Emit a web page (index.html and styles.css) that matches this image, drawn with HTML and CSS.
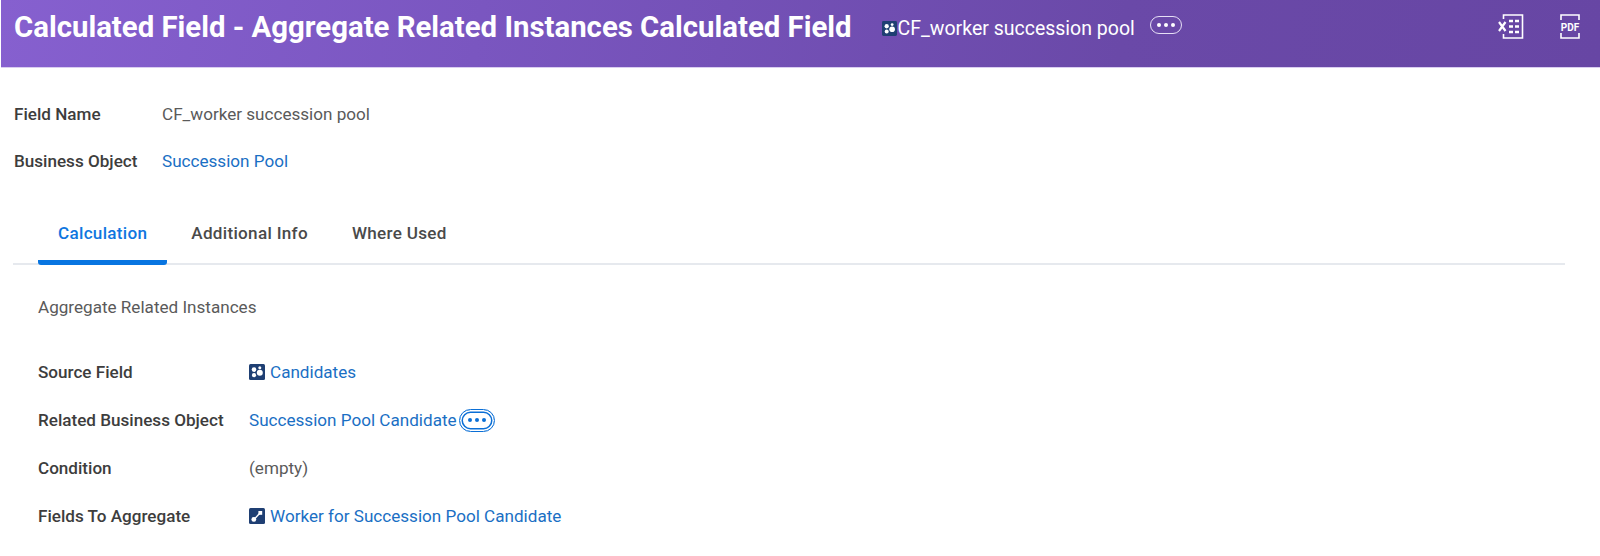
FILE: index.html
```html
<!DOCTYPE html>
<html lang="en">
<head>
<meta charset="UTF-8" />
<title>Calculated Field</title>
<link rel="stylesheet" href="styles.css">
</head>
<body>

<header class="title-bar">
  <h1>Calculated Field - Aggregate Related Instances Calculated Field</h1>
  <div class="title-instance">
    <svg class="obj-icon small" viewBox="0 0 16 16">
      <rect width="16" height="16" rx="1.5" fill="#1f3f73"/>
      <circle cx="5" cy="5.600" r="2.300" fill="#fff"/>
      <circle cx="5" cy="11.200" r="2.100" fill="#fff"/>
      <circle cx="10.800" cy="8.800" r="3" fill="#fff"/>
      <circle cx="10.800" cy="3.800" r="1.500" fill="#fff"/>
    </svg>
    <span>CF_worker succession pool</span>
  </div>
  <button class="dots-btn light"><i></i><i></i><i></i></button>
  <div class="export-icons">
    <svg class="export" viewBox="0 0 26 25" fill="none" stroke="#fff" stroke-width="1.6">
      <path d="M5.500 5V1h19v23h-19v-4"/>
      <path d="M1 8l6.500 9M7.500 8L1 17" stroke-width="2.200"/>
      <path d="M11 7h4M17 7h4M11 12.500h4M17 12.500h4M11 18h4M17 18h4" stroke-width="2.400"/>
    </svg>
    <svg class="export pdf" viewBox="0 0 22 25" fill="none" stroke="#fff" stroke-width="1.6">
      <path d="M2 6V1h18v5M2 19v5h18v-5"/>
      <text x="11" y="16.500" class="pdf-text">PDF</text>
    </svg>
  </div>
</header>

<main>
  <section class="summary">
    <div class="summary-row">
      <span class="label">Field Name</span>
      <span class="value">CF_worker succession pool</span>
    </div>
    <div class="summary-row">
      <span class="label">Business Object</span>
      <a class="link" href="#">Succession Pool</a>
    </div>
  </section>

  <nav class="tabs">
    <a href="#" class="tab active">Calculation</a>
    <a href="#" class="tab">Additional Info</a>
    <a href="#" class="tab">Where Used</a>
  </nav>

  <section class="tab-body">
    <p class="calc-type">Aggregate Related Instances</p>
    <div class="fields">
      <div class="field-row">
        <span class="label">Source Field</span>
        <span class="field-value">
          <svg class="obj-icon" viewBox="0 0 16 16">
            <rect width="16" height="16" rx="1.5" fill="#1f3f73"/>
            <circle cx="5" cy="5.600" r="2.300" fill="#fff"/>
            <circle cx="5" cy="11.200" r="2.100" fill="#fff"/>
            <circle cx="10.800" cy="8.800" r="3" fill="#fff"/>
            <circle cx="10.800" cy="3.800" r="1.500" fill="#fff"/>
          </svg>
          <a class="link" href="#">Candidates</a>
        </span>
      </div>
      <div class="field-row">
        <span class="label">Related Business Object</span>
        <span class="field-value tight">
          <a class="link" href="#">Succession Pool Candidate</a>
          <button class="dots-btn focus"><i></i><i></i><i></i></button>
        </span>
      </div>
      <div class="field-row">
        <span class="label">Condition</span>
        <span class="value">(empty)</span>
      </div>
      <div class="field-row">
        <span class="label">Fields To Aggregate</span>
        <span class="field-value">
          <svg class="obj-icon" viewBox="0 0 16 16">
            <rect width="16" height="16" rx="1.5" fill="#1f3f73"/>
            <path d="M5 11.500L11 5" stroke="#fff" stroke-width="1.4"/>
            <circle cx="4.800" cy="11.400" r="2.400" fill="#fff"/>
            <rect x="9.400" y="3" width="3.800" height="3.800" fill="#fff"/>
          </svg>
          <a class="link" href="#">Worker for Succession Pool Candidate</a>
        </span>
      </div>
    </div>
  </section>
</main>

</body>
</html>
```

FILE: styles.css
```css
* {
  box-sizing: border-box;
}
html, body {
  height: 100%;
}
body {
  margin: 0;
  background: #fff;
  color: #4a4a4a;
  font-family: Roboto, "Liberation Sans", sans-serif;
  font-size: 17.1px;
  overflow: hidden;
}

/* top purple bar */
.title-bar {
  height: 68px;
  margin-left: 1px;
  padding: 0 19px 14px 13px;
  display: flex;
  align-items: center;
  color: #fff;
  background: linear-gradient(100deg, #8660cf 0%, #7a56c0 30%, #6a49a8 70%, #6746a4 100%);
  border-bottom: 1px solid #d9cdf0;
}
.title-bar h1 {
  margin: 0;
  font-size: 29.35px;
  font-weight: 700;
  white-space: nowrap;
}
.title-instance {
  display: flex;
  align-items: center;
  gap: 1px;
  margin-left: 30px;
  margin-top: 3px;
  font-size: 19.5px;
}
.obj-icon {
  width: 16px;
  height: 16px;
  flex: none;
}
.obj-icon.small {
  width: 15px;
  height: 15px;
}
.dots-btn {
  width: 32px;
  height: 18px;
  padding: 0;
  display: inline-flex;
  align-items: center;
  justify-content: center;
  gap: 3px;
  background: none;
  border-radius: 9px;
}
.dots-btn i {
  width: 4px;
  height: 4px;
  border-radius: 50%;
  background: currentColor;
}
.dots-btn.light {
  margin-left: 15px;
  margin-bottom: 3px;
  color: #fff;
  border: 1.5px solid #e6dff5;
}
.dots-btn.focus {
  width: 36px;
  height: 23px;
  margin-left: 2px;
  border-radius: 12px;
  color: #0b6fd6;
  border: 1.5px solid #0b6fd6;
  box-shadow: inset 0 0 0 1.5px #fff, inset 0 0 0 3px #0b6fd6;
}
.export-icons {
  margin-left: auto;
  display: flex;
  gap: 35px;
}
.export {
  width: 26px;
  height: 25px;
}
.export.pdf {
  width: 22px;
}
.pdf-text {
  font-family: Roboto, sans-serif;
  font-size: 10px;
  font-weight: 700;
  fill: #fff;
  stroke: none;
  text-anchor: middle;
}

main {
  padding: 0 35px 0 14px;
}
.label {
  font-weight: 500;
  color: #3d3d3d;
}
.link {
  color: #1a6fc4;
  text-decoration: none;
}
.value {
  color: #5a5a5a;
}

/* field name / business object */
.summary {
  padding-top: 22px;
}
.summary-row {
  display: grid;
  grid-template-columns: 148px 1fr;
  height: 47.5px;
  align-items: center;
}

/* tabs */
.tabs {
  margin-top: 24px;
  margin-left: -1px;
  padding-left: 25px;
  height: 56px;
  display: flex;
  border-bottom: 2px solid #e6e9ee;
}
.tab {
  padding: 14px 20px 0;
  height: 56px;
  font-weight: 500;
  color: #4a4a4a;
  text-decoration: none;
  letter-spacing: 0.3px;
  border-bottom: 5px solid transparent;
}
.tab + .tab {
  padding-left: 24px;
}
.tab.active {
  color: #0f76e0;
  border-bottom-color: #0875e1;
  border-radius: 3px;
}

.tab-body {
  padding-left: 24px;
}
.calc-type {
  margin: 32px 0 31px;
  line-height: 20px;
  color: #5a5a5a;
}
.field-row {
  display: grid;
  grid-template-columns: 211px 1fr;
  height: 48px;
  align-items: center;
}
.field-value {
  display: flex;
  align-items: center;
  gap: 5px;
}
.field-value.tight {
  gap: 0;
}
```
